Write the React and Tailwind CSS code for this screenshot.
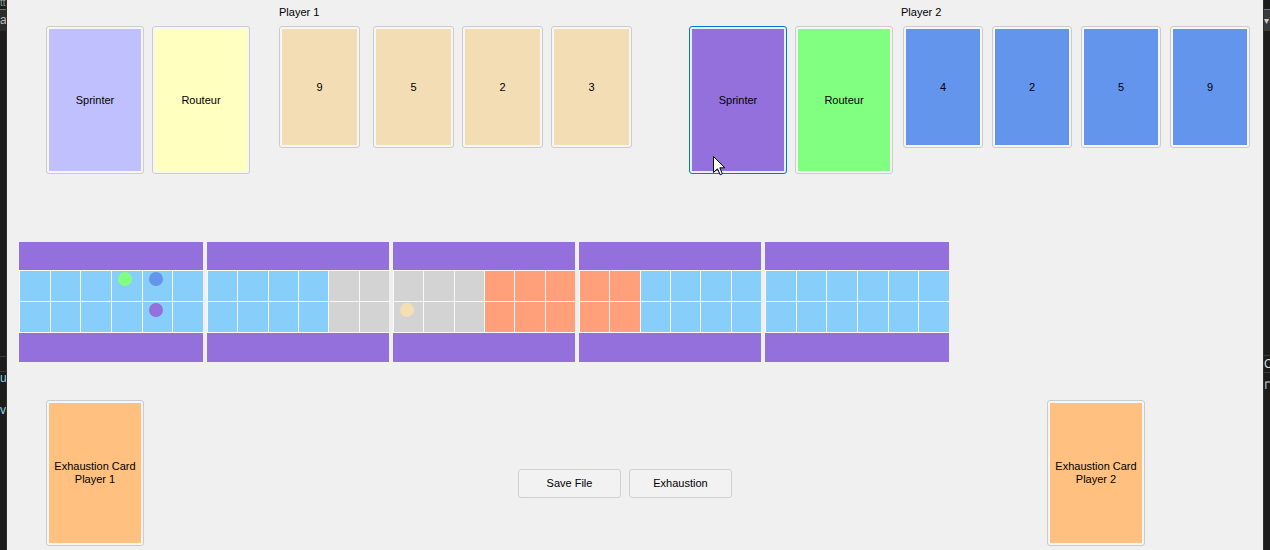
const CELL = { b: 'bg-[#87cefa]', g: 'bg-[#d3d3d3]', s: 'bg-[#ffa07a]' };
const SEGMENTS = [
  { cols: 'bbbbbb', w: 'w-[184px]' },
  { cols: 'bbbbgg', w: 'w-[182px]' },
  { cols: 'gggsss', w: 'w-[182px]' },
  { cols: 'ssbbbb', w: 'w-[182px]' },
  { cols: 'bbbbbb', w: 'w-[184px]' },
];
const TOKENS = {
  '0-0-3': 'bg-[#80ff80]',
  '0-0-4': 'bg-[#6495ed]',
  '0-1-4': 'bg-[#9370db]',
  '2-1-0': 'bg-[#f5deb3]',
};

function Card({ w, h, fill, label, selected, className = '', children }) {
  return (
    <div
      className={`relative shrink-0 rounded-[3px] border p-[2px] ${
        selected ? 'border-[#0078d7] bg-[#e5f1fb]' : 'border-[#cccccc] bg-[#f6f6f6]'
      } ${w} ${h} ${className}`}
    >
      <div className={`flex h-full w-full items-center justify-center text-center leading-[13px] ${fill}`}>
        {label}
      </div>
      {children}
    </div>
  );
}

function Cursor() {
  return (
    <svg className="absolute left-[23px] top-[129px]" width="13" height="20" viewBox="0 0 13 20">
      <path
        d="M0.5 0.5 L0.5 16.5 L4.5 12.8 L7.2 18.8 L9.4 17.8 L6.8 11.8 L11.8 11.8 Z"
        fill="#ffffff"
        stroke="#000000"
        strokeWidth="1"
        strokeLinejoin="round"
      />
    </svg>
  );
}

function Segment({ index, cols, w }) {
  return (
    <div className={`flex flex-col bg-[#f8f8f8] ${w}`}>
      <div className="h-[28px] bg-[#9370db]" />
      <div className="grid grid-cols-6 grid-rows-2 gap-px py-px pl-px">
        {[0, 1].map((row) =>
          cols.split('').map((c, col) => {
            const token = TOKENS[`${index}-${row}-${col}`];
            return (
              <div key={`${row}-${col}`} className={`h-[30px] pl-[6px] pt-px ${CELL[c]}`}>
                {token && <div className={`h-[14px] w-[14px] rounded-full ${token}`} />}
              </div>
            );
          })
        )}
      </div>
      <div className="h-[29px] bg-[#9370db]" />
    </div>
  );
}

function Button({ children }) {
  return (
    <button className="flex h-[29px] w-[103px] items-center justify-center rounded-[3px] border border-[#d0d0d0] bg-[#f2f2f2] text-[11px] text-black">
      {children}
    </button>
  );
}

export default function App() {
  return (
    <div className="flex h-[550px] w-[1270px] overflow-hidden font-['Liberation_Sans',Arial,sans-serif] text-[11px] text-black">
      {/* IDE behind, left */}
      <div className="flex w-[7px] shrink-0 flex-col overflow-hidden border-r border-[#2e2e2e] bg-[#1c1c1c]">
        <div className="h-[9px] text-[10px] leading-[6px] text-[#9a9a9a]">tt</div>
        <div className="h-px bg-[#7160e8]" />
        <div className="h-[21px] bg-[#2d2d2d] text-[12px] leading-[21px] text-[#bdbdbd]">ar</div>
        <div className="h-[325px]" />
        <div className="h-[16px] border-y border-[#3a3a3a]" />
        <div className="h-[12px] text-[12px] leading-[12px] text-[#9ccde0]">ut</div>
        <div className="mt-[20px] text-[12px] leading-[12px] text-[#9ccde0]">v</div>
      </div>

      {/* Form */}
      <div className="flex flex-1 flex-col bg-[#f0f0f0]">
        {/* Top row: hands */}
        <div className="flex items-start">
          <Card className="ml-[39px] mt-[26px]" w="w-[98px]" h="h-[148px]" fill="bg-[#c0c0ff]" label="Sprinter" />
          <Card className="ml-[8px] mt-[26px]" w="w-[98px]" h="h-[148px]" fill="bg-[#ffffc0]" label="Routeur" />

          <div className="ml-[29px] flex flex-col">
            <div className="h-[26px] pt-[6px] leading-[13px]">Player 1</div>
            <div className="flex gap-[8px]">
              {['9', '5', '2', '3'].map((n, i) => (
                <Card
                  key={i}
                  className={i === 0 ? 'mr-[5px]' : ''}
                  w="w-[81px]"
                  h="h-[122px]"
                  fill="bg-[#f3ddb4]"
                  label={n}
                />
              ))}
            </div>
          </div>

          <Card className="ml-[57px] mt-[26px]" w="w-[98px]" h="h-[148px]" fill="bg-[#9370db]" label="Sprinter" selected>
            <Cursor />
          </Card>
          <Card className="ml-[8px] mt-[26px]" w="w-[98px]" h="h-[148px]" fill="bg-[#80ff80]" label="Routeur" />

          <div className="ml-[10px] flex flex-col">
            <div className="-ml-[2px] h-[26px] pt-[6px] leading-[13px]">Player 2</div>
            <div className="flex gap-[9px]">
              {['4', '2', '5', '9'].map((n, i) => (
                <Card key={i} w="w-[80px]" h="h-[122px]" fill="bg-[#6495ed]" label={n} />
              ))}
            </div>
          </div>
        </div>

        {/* Board */}
        <div className="ml-[12px] mt-[68px] flex gap-[4px]">
          {SEGMENTS.map((s, i) => (
            <Segment key={i} index={i} cols={s.cols} w={s.w} />
          ))}
        </div>

        {/* Bottom row */}
        <div className="mt-[38px] flex items-start">
          <Card
            className="ml-[39px]"
            w="w-[98px]"
            h="h-[146px]"
            fill="bg-[#ffc080]"
            label={
              <span>
                Exhaustion Card
                <br />
                Player 1
              </span>
            }
          />
          <div className="ml-[374px] mt-[69px] flex gap-[8px]">
            <Button>Save File</Button>
            <Button>Exhaustion</Button>
          </div>
          <Card
            className="ml-[315px]"
            w="w-[98px]"
            h="h-[146px]"
            fill="bg-[#ffc080]"
            label={
              <span>
                Exhaustion Card
                <br />
                Player 2
              </span>
            }
          />
        </div>
      </div>

      {/* IDE behind, right */}
      <div className="flex w-[7px] shrink-0 flex-col overflow-hidden border-l border-[#2e2e2e] bg-[#1c1c1c]">
        <div className="h-[9px]" />
        <div className="h-px bg-[#7160e8]" />
        <div className="h-[21px] bg-[#3a3a3a] text-[10px] leading-[21px] text-[#cfcfcf]">▾</div>
        <div className="h-[324px]" />
        <div className="h-[18px] border-y border-[#3a3a3a] text-[12px] leading-[16px] text-[#d8d8d8]">CF</div>
        <div className="mt-[6px] text-[12px] leading-[12px] text-[#cfcfcf]">⊓</div>
      </div>
    </div>
  );
}
